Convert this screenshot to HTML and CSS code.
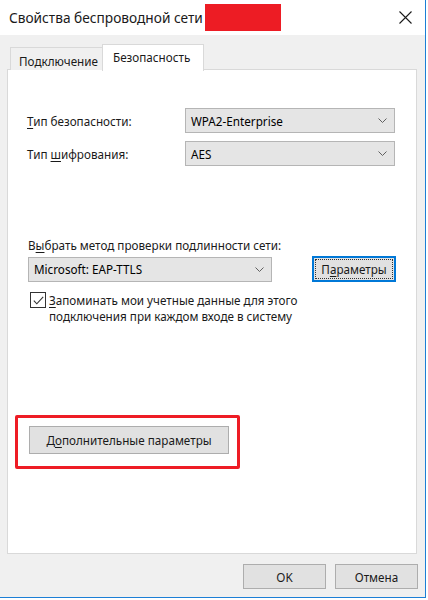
FILE: index.html
```html
<!DOCTYPE html>
<html lang="ru">
<head>
<meta charset="utf-8">
<link rel="stylesheet" href="styles.css">
</head>
<body>
<div class="window">
  <div class="titlebar">
    <span class="title">Свойства беспроводной сети</span>
    <span class="redact"></span>
    <svg class="close" width="13" height="13" viewBox="0 0 13 13"><path d="M0.5 0.5 L12.5 12.5 M12.5 0.5 L0.5 12.5" stroke="#1a1a1a" stroke-width="1.1" fill="none"/></svg>
  </div>
  <div class="client">
    <div class="tabs">
      <div class="tab">Подключение</div>
      <div class="tab active">Безопасность</div>
    </div>
    <div class="panel">
      <div class="row row1">
        <span class="label"><u>Т</u>ип безопасности:</span>
        <div class="select wide"><span>WPA2-Enterprise</span><svg class="chev" width="9" height="5" viewBox="0 0 9 5"><path d="M0.5 0.5 L4.5 4.5 L8.5 0.5" stroke="#606060" fill="none"/></svg></div>
      </div>
      <div class="row row2">
        <span class="label">Тип <u>ш</u>ифрования:</span>
        <div class="select wide"><span>AES</span><svg class="chev" width="9" height="5" viewBox="0 0 9 5"><path d="M0.5 0.5 L4.5 4.5 L8.5 0.5" stroke="#606060" fill="none"/></svg></div>
      </div>
      <div class="method-label">В<u>ы</u>брать метод проверки подлинности сети:</div>
      <div class="row row3">
        <div class="select method"><span>Microsoft: EAP-TTLS</span><svg class="chev" width="9" height="5" viewBox="0 0 9 5"><path d="M0.5 0.5 L4.5 4.5 L8.5 0.5" stroke="#606060" fill="none"/></svg></div>
        <div class="btn focused"><span class="focusring">П<u>а</u>раметры</span></div>
      </div>
      <div class="check-row">
        <span class="checkbox"><svg width="11" height="9" viewBox="0 0 11 9"><path d="M0.8 4.6 L3.8 7.8 L10.2 0.8" stroke="#333" stroke-width="1.1" fill="none"/></svg></span>
        <span class="check-text"><u>З</u>апоминать мои учетные данные для этого<br>подключения при каждом входе в систему</span>
      </div>
      <div class="highlight">
        <div class="btn adv">Д<u>о</u>полнительные параметры</div>
      </div>
    </div>
    <div class="footer">
      <div class="btn foot">OK</div>
      <div class="btn foot">Отмена</div>
    </div>
  </div>
</div>
</body>
</html>
```
FILE: styles.css
```css
html, body {
  margin: 0;
  padding: 0;
  background: #ffffff;
}
body {
  width: 428px;
  height: 600px;
  overflow: hidden;
  font-family: "Noto Sans", "Liberation Sans", sans-serif;
  font-size: 11.7px;
  color: #000;
}
u {
  text-decoration: underline;
  text-underline-offset: 2px;
}
.window {
  width: 425px;
  height: 597px;
  border-right: 1px solid #1c7fd6;
  border-bottom: 1px solid #1c7fd6;
  display: flex;
  flex-direction: column;
  background: #f0f0f0;
}
.titlebar {
  height: 35px;
  background: #ffffff;
  display: flex;
  align-items: center;
  flex-shrink: 0;
}
.title {
  margin-left: 9px;
  font-size: 13.7px;
  color: #1a1a1a;
  white-space: nowrap;
}
.redact {
  width: 76px;
  height: 27px;
  background: #ed1c24;
  margin-left: 2px;
}
.close {
  margin-left: auto;
  margin-right: 13px;
}
.client {
  flex: 1;
  display: flex;
  flex-direction: column;
  padding: 9px 0 0 7px;
}
.tabs {
  display: flex;
  align-items: flex-end;
  margin-left: 3px;
  height: 26px;
  position: relative;
  z-index: 1;
  margin-bottom: -1px;
}
.tab {
  height: 23px;
  box-sizing: border-box;
  border: 1px solid #d9d9d9;
  border-bottom: none;
  background: #f0f0f0;
  padding: 3px 0 0 8px;
  display: flex;
  align-items: center;
  width: 93px;
  color: #1a1a1a;
  white-space: nowrap;
}
.tab.active {
  height: 27px;
  width: 102px;
  background: #ffffff;
  margin-left: -1px;
  padding: 0 0 3px 10px;
  margin-bottom: -1px;
}
.panel {
  width: 410px;
  height: 485px;
  box-sizing: border-box;
  background: #ffffff;
  border: 1px solid #d9d9d9;
  display: flex;
  flex-direction: column;
  padding-left: 19px;
}
.row {
  display: flex;
  align-items: center;
}
.row1 { margin-top: 38px; }
.row2 { margin-top: 8px; }
.label {
  width: 158px;
  color: #1a1a1a;
}
.select {
  box-sizing: border-box;
  height: 25px;
  background: #e5e5e5;
  border: 1px solid #b5b5b5;
  display: flex;
  align-items: center;
  padding: 0 7px 0 5px;
}
.select span { flex: 1; }
.select.wide { width: 210px; }
.select.method { width: 244px; }
.method-label {
  margin-top: 71px;
  margin-left: 1px;
  height: 17px;
  color: #1a1a1a;
}
.row3 {
  margin-top: 2px;
  margin-left: 1px;
}
.btn {
  box-sizing: border-box;
  background: #e1e1e1;
  border: 1px solid #adadad;
  display: flex;
  align-items: center;
  justify-content: center;
  color: #1a1a1a;
}
.btn.focused {
  margin-left: 40px;
  width: 84px;
  height: 26px;
  border: 2px solid #0078d7;
  padding: 1px;
}
.focusring {
  flex: 1;
  align-self: stretch;
  display: flex;
  align-items: center;
  justify-content: center;
  border: 1px dotted #333;
}
.check-row {
  margin-top: 10px;
  margin-left: 3px;
  display: flex;
  align-items: flex-start;
}
.checkbox {
  box-sizing: border-box;
  width: 16px;
  height: 16px;
  border: 1px solid #333;
  background: #fff;
  display: flex;
  align-items: center;
  justify-content: center;
  flex-shrink: 0;
}
.check-text {
  margin-left: 3px;
  line-height: 16px;
  color: #1a1a1a;
}
.highlight {
  margin-top: 91px;
  margin-left: -12px;
  width: 225px;
  height: 54px;
  box-sizing: border-box;
  border: 3px solid #ee1c25;
  border-radius: 2px;
  padding: 8px 0 0 11px;
}
.btn.adv {
  width: 200px;
  height: 28px;
}
.footer {
  display: flex;
  justify-content: flex-end;
  gap: 9px;
  padding: 10px 7px 0 0;
}
.btn.foot {
  width: 83px;
  height: 25px;
}
```
